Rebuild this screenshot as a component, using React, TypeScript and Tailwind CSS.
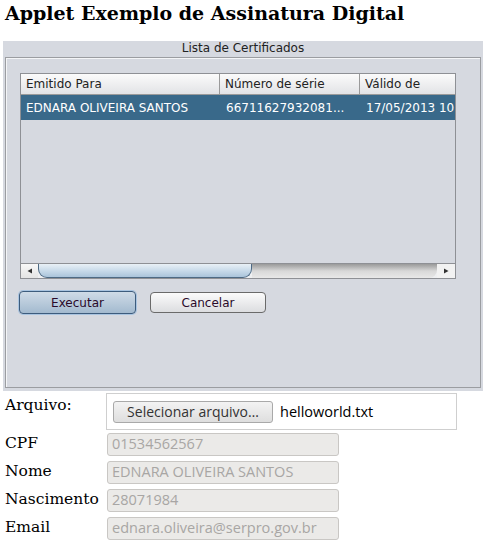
import React from "react";

const sans = { fontFamily: '"DejaVu Sans", Verdana, sans-serif' };

function Field({ label, value }: { label: string; value: string }) {
  return (
    <div className="flex items-center h-[28px]">
      <div className="w-[107px] pl-[5px] text-[15.5px] text-black" style={{ fontFamily: '"DejaVu Serif", serif' }}>
        {label}
      </div>
      <div
        className="w-[232px] h-[23px] rounded-[3px] border border-[#c9c7c4] bg-[#ebeae8] pl-[4px] flex items-center text-[14.5px] text-[#a8a6a4]"
        style={{ fontFamily: '"Open Sans", "DejaVu Sans", sans-serif' }}
      >
        {value}
      </div>
    </div>
  );
}

export default function App() {
  return (
    <div className="w-[489px] h-[557px] bg-white overflow-hidden">
      <h3
        className="pl-[5px] pt-[1px] text-[19px] font-bold text-black leading-[24px]"
        style={{ fontFamily: '"DejaVu Serif", serif' }}
      >
        Applet Exemplo de Assinatura Digital
      </h3>
      <div className="ml-[3px] mt-[16px] w-[480px] h-[350px] bg-[#d6d9e0] flex flex-col" style={sans}>
        <div className="h-[16px] text-center text-[12px] leading-[14px] text-[#222]">Lista de Certificados</div>
        <div className="mx-[2px] h-[331px] border border-[#9b9da1] shadow-[inset_1px_1px_0_#f4f5f7] pt-[15px] pl-[14px]">
          <div className="w-[436px] h-[206px] border border-[#8e9095] bg-[#d6d9e0] flex flex-col">
            <div className="flex h-[21px] border-b border-[#9a9a9a] bg-gradient-to-b from-[#fbfbfb] to-[#e2e3e6] text-[12px] text-[#222]">
              <div className="w-[199px] border-r border-[#9a9a9a] pl-[5px] leading-[20px]">Emitido Para</div>
              <div className="w-[140px] border-r border-[#9a9a9a] pl-[5px] leading-[20px]">Número de série</div>
              <div className="flex-1 pl-[5px] leading-[20px] overflow-hidden whitespace-nowrap">Válido de</div>
            </div>
            <div className="flex h-[25px] bg-[#39698a] text-[12px] text-white items-center whitespace-nowrap overflow-hidden">
              <div className="w-[200px] pl-[5px]">EDNARA OLIVEIRA SANTOS</div>
              <div className="w-[140px] pl-[5px]">66711627932081...</div>
              <div className="flex-1 pl-[5px] overflow-hidden">17/05/2013 10</div>
            </div>
            <div className="flex-1" />
            <div className="flex h-[15px] border-t border-[#8e9095] bg-[#eeeff1]">
              <div className="w-[17px] flex items-center justify-center bg-gradient-to-b from-[#f8f8f8] to-[#e4e4e4]">
                <svg width="6" height="6" viewBox="0 0 6 6"><path d="M5 0.5 L0.5 3 L5 5.5 Z" fill="#333" /></svg>
              </div>
              <div className="w-[214px] h-[14px] rounded-b-[9px] border border-t-0 border-[#4e6a84] bg-gradient-to-b from-[#e9f0f6] via-[#c9dbea] to-[#aac4da]" />
              <div className="flex-1 bg-gradient-to-b from-[#9a9a9a] via-[#d8d8d8] to-[#e8e8e8] rounded-br-[8px]" />
              <div className="w-[18px] flex items-center justify-center bg-[#f2f2f2]">
                <svg width="6" height="6" viewBox="0 0 6 6"><path d="M1 0.5 L5.5 3 L1 5.5 Z" fill="#333" /></svg>
              </div>
            </div>
          </div>
          <div className="flex gap-[14px] mt-[12px] ml-[-1px]">
            <button className="w-[117px] h-[23px] rounded-[4px] border border-[#3d5c7d] bg-gradient-to-b from-[#cfdbe7] to-[#a3bacf] text-[12px] text-[#2a0a2a] shadow-[0_0_0_1px_#a9c4e0]">
              Executar
            </button>
            <button className="w-[116px] h-[21px] mt-[1px] rounded-[4px] border border-[#6a6a6a] bg-gradient-to-b from-[#fbfbfb] to-[#dcdde0] text-[12px] text-[#2a0a2a]">
              Cancelar
            </button>
          </div>
        </div>
      </div>
      <div className="mt-[2px] flex items-start">
        <div className="w-[106px] pl-[5px] pt-[1px] text-[15.5px] text-black" style={{ fontFamily: '"DejaVu Serif", serif' }}>
          Arquivo:
        </div>
        <div
          className="w-[351px] h-[37px] border border-[#cfcfcf] flex items-center pl-[6px] gap-[7px]"
          style={{ fontFamily: '"Open Sans", "DejaVu Sans", sans-serif' }}
        >
          <div className="w-[160px] h-[22px] rounded-[3px] border border-[#a9a9a9] bg-gradient-to-b from-[#f3f3f3] to-[#dedede] text-[14px] text-[#333] flex items-center justify-center">
            Selecionar arquivo…
          </div>
          <div className="text-[14.5px] text-black">helloworld.txt</div>
        </div>
      </div>
      <div className="flex flex-col">
        <Field label="CPF" value="01534562567" />
        <Field label="Nome" value="EDNARA OLIVEIRA SANTOS" />
        <Field label="Nascimento" value="28071984" />
        <Field label="Email" value="ednara.oliveira@serpro.gov.br" />
      </div>
    </div>
  );
}
